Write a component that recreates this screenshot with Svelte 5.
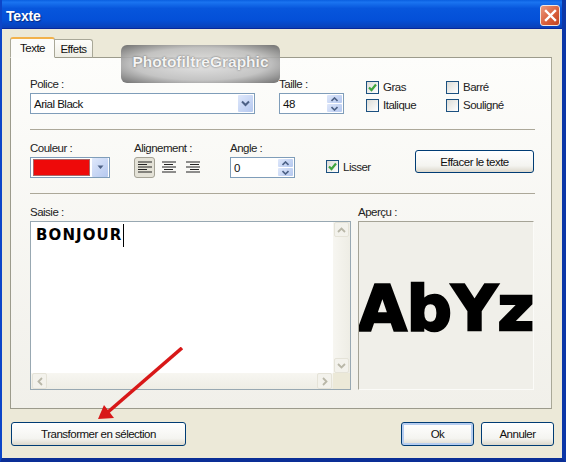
<script lang="ts">
  const alignIcons = [
    { id: 'left', lines: [[0, 13], [0, 9], [0, 13], [0, 9], [0, 13]], active: true },
    { id: 'center', lines: [[0, 13], [2, 9], [0, 13], [2, 9], [0, 13]], active: false },
    { id: 'right', lines: [[0, 13], [4, 9], [0, 13], [4, 9], [0, 13]], active: false },
  ];
</script>

<div class="window">
  <header class="titlebar">
    <span class="title">Texte</span>
    <button class="close" aria-label="Fermer">
      <svg width="13" height="13" viewBox="0 0 13 13">
        <path d="M2 2 L11 11 M11 2 L2 11" stroke="#fff" stroke-width="2.4" stroke-linecap="square" />
      </svg>
    </button>
  </header>

  <div class="client">
    <div class="tabs">
      <div class="tab active">Texte</div>
      <div class="tab">Effets</div>
    </div>

    <section class="panel">
      <div class="row row-font">
        <div class="field police">
          <span class="label">Police :</span>
          <div class="input combo">
            <span class="value">Arial Black</span>
            <span class="drop">
              <svg width="9" height="7" viewBox="0 0 9 7"><path d="M1 1.5 L4.5 5 L8 1.5" fill="none" stroke="#4d6185" stroke-width="2" /></svg>
            </span>
          </div>
        </div>
        <div class="field taille">
          <span class="label">Taille :</span>
          <div class="input spin">
            <span class="value">48</span>
            <span class="spinner">
              <span class="arrow"><svg width="7" height="5" viewBox="0 0 7 5"><path d="M.5 4 L3.5 1 L6.5 4" fill="none" stroke="#4d6185" stroke-width="1.6" /></svg></span>
              <span class="arrow"><svg width="7" height="5" viewBox="0 0 7 5"><path d="M.5 1 L3.5 4 L6.5 1" fill="none" stroke="#4d6185" stroke-width="1.6" /></svg></span>
            </span>
          </div>
        </div>
        <div class="checks">
          <label class="check"><span class="box on"><svg width="11" height="11" viewBox="0 0 11 11"><path d="M2 5.5 L4.5 8 L9 2.5" fill="none" stroke="#3fa53f" stroke-width="2.2" /></svg></span>Gras</label>
          <label class="check"><span class="box"></span>Barré</label>
          <label class="check"><span class="box"></span>Italique</label>
          <label class="check"><span class="box"></span>Souligné</label>
        </div>
      </div>

      <hr />

      <div class="row row-style">
        <div class="field couleur">
          <span class="label">Couleur :</span>
          <div class="input color">
            <span class="swatch"></span>
            <span class="drop small">
              <svg width="7" height="5" viewBox="0 0 7 5"><path d="M.5 .5 L3.5 4 L6.5 .5 Z" fill="#4d6185" /></svg>
            </span>
          </div>
        </div>
        <div class="field alignement">
          <span class="label">Alignement :</span>
          <div class="aligns">
            {#each alignIcons as icon}
              <span class="align" class:active={icon.active}>
                <svg width="15" height="13" viewBox="0 0 15 13">
                  {#each icon.lines as [x, w], i}
                    <rect x={x + 1} y={i * 2.5 + 0.5} width={w + (i % 2 ? 0 : 1)} height="1" fill="#222" />
                  {/each}
                </svg>
              </span>
            {/each}
          </div>
        </div>
        <div class="field angle">
          <span class="label">Angle :</span>
          <div class="input spin">
            <span class="value">0</span>
            <span class="spinner">
              <span class="arrow"><svg width="7" height="5" viewBox="0 0 7 5"><path d="M.5 4 L3.5 1 L6.5 4" fill="none" stroke="#4d6185" stroke-width="1.6" /></svg></span>
              <span class="arrow"><svg width="7" height="5" viewBox="0 0 7 5"><path d="M.5 1 L3.5 4 L6.5 1" fill="none" stroke="#4d6185" stroke-width="1.6" /></svg></span>
            </span>
          </div>
        </div>
        <label class="check lisser"><span class="box on"><svg width="11" height="11" viewBox="0 0 11 11"><path d="M2 5.5 L4.5 8 L9 2.5" fill="none" stroke="#3fa53f" stroke-width="2.2" /></svg></span>Lisser</label>
        <button class="btn effacer">Effacer le texte</button>
      </div>

      <hr />

      <div class="row row-text">
        <div class="field saisie">
          <span class="label">Saisie :</span>
          <div class="textbox">
            <div class="text-area"><span class="typed">BONJOUR</span><span class="caret"></span></div>
            <div class="vscroll">
              <span class="sb-btn"><svg width="9" height="6" viewBox="0 0 9 6"><path d="M1 5 L4.5 1.5 L8 5" fill="none" stroke="#b9b7a8" stroke-width="1.8" /></svg></span>
              <span class="sb-btn"><svg width="9" height="6" viewBox="0 0 9 6"><path d="M1 1 L4.5 4.5 L8 1" fill="none" stroke="#b9b7a8" stroke-width="1.8" /></svg></span>
            </div>
            <div class="hscroll">
              <span class="sb-btn"><svg width="6" height="9" viewBox="0 0 6 9"><path d="M5 1 L1.5 4.5 L5 8" fill="none" stroke="#b9b7a8" stroke-width="1.8" /></svg></span>
              <span class="sb-btn"><svg width="6" height="9" viewBox="0 0 6 9"><path d="M1 1 L4.5 4.5 L1 8" fill="none" stroke="#b9b7a8" stroke-width="1.8" /></svg></span>
            </div>
            <div class="corner"></div>
          </div>
        </div>
        <div class="field apercu">
          <span class="label">Aperçu :</span>
          <div class="preview"><span>AbYz</span></div>
        </div>
      </div>
    </section>

    <footer class="footer">
      <button class="btn transformer">Transformer en sélection</button>
      <div class="actions">
        <button class="btn ok">Ok</button>
        <button class="btn annuler">Annuler</button>
      </div>
    </footer>
  </div>

  <div class="watermark">PhotofiltreGraphic</div>

  <svg class="pointer" width="100" height="80" viewBox="0 0 100 80">
    <path d="M84 1 L10 65" stroke="#d81818" stroke-width="3.6" fill="none" />
    <path d="M0 72 L6 58 L16 71 Z" fill="#d81818" />
  </svg>
</div>

<style>
  :global(body) {
    margin: 0;
    background: #fff;
  }

  .window {
    position: relative;
    width: 566px;
    height: 462px;
    display: flex;
    flex-direction: column;
    box-sizing: border-box;
    overflow: hidden;
    font-family: "Liberation Sans", Arial, sans-serif;
    font-size: 11.5px;
    letter-spacing: -0.5px;
    color: #111;
    background: #0a3fc4;
    border-left: 2px solid #0c45c8;
    border-right: 4px solid #0c37a8;
    border-bottom: 4px solid #0a2e96;
  }

  .titlebar {
    height: 28px;
    flex: none;
    margin: 0 -4px 0 -2px;
    padding: 0 6px;
    display: flex;
    align-items: center;
    justify-content: space-between;
    background: linear-gradient(#0a5fe0 0, #1a74f0 8%, #0756dc 30%, #0450d8 70%, #0a40b8 100%);
    border-bottom: 1px solid #07289c;
  }

  .title {
    font: bold 14px "Liberation Sans", Arial, sans-serif;
    letter-spacing: -0.2px;
    color: #fff;
    text-shadow: 1px 1px 1px #0a2a80;
    margin-top: 3px;
  }

  .close {
    width: 20px;
    height: 21px;
    margin-right: 0;
    margin-top: 2px;
    padding: 0;
    display: flex;
    align-items: center;
    justify-content: center;
    border: 1px solid #f0e6e0;
    border-radius: 3px;
    background: linear-gradient(135deg, #eb9a7e, #d9603c 55%, #c2431f);
  }

  .client {
    flex: 1;
    min-height: 0;
    display: flex;
    flex-direction: column;
    padding: 8px 10px 0 8px;
    background: #ece9d8;
  }

  .tabs {
    display: flex;
    align-items: flex-end;
    height: 21px;
    flex: none;
    position: relative;
    z-index: 1;
    margin-bottom: -1px;
  }

  .tab {
    box-sizing: border-box;
    width: 38px;
    height: 19px;
    line-height: 18px;
    text-align: center;
    border: 1px solid #a9a898;
    border-bottom: 1px solid #9c9b8c;
    border-left: none;
    border-radius: 0 3px 0 0;
    background: linear-gradient(#fdfdfb, #efeee5);
  }

  .tab.active {
    width: 45px;
    height: 21px;
    line-height: 19px;
    border-left: 1px solid #a9a898;
    border-top: 2px solid #f2b24c;
    border-bottom: 1px solid #fcfcfa;
    border-radius: 3px 3px 0 0;
    background: #fcfcfa;
  }

  .panel {
    height: 352px;
    flex: none;
    box-sizing: border-box;
    padding: 20px 16px 0 19px;
    display: flex;
    flex-direction: column;
    border: 1px solid #9c9b8c;
    border-right-color: #a9a898;
    background: linear-gradient(#fdfdfb, #f1f0ea);
  }

  .row {
    display: flex;
  }

  .row-font {
    height: 36px;
  }

  .row-style {
    height: 43px;
    position: relative;
  }

  .row-text {
    gap: 7px;
  }

  hr {
    height: 1px;
    margin: 15px 0 0;
    border: none;
    background: #aca899;
    flex: none;
  }

  hr + .row {
    margin-top: 12px;
  }

  .row-style + hr {
    margin-top: 8px;
  }

  .field {
    display: flex;
    flex-direction: column;
  }

  .label {
    height: 15px;
    line-height: 13px;
    color: #222;
  }

  .input {
    box-sizing: border-box;
    height: 21px;
    display: flex;
    align-items: center;
    border: 1px solid #7f9db9;
    background: #fff;
  }

  .value {
    flex: 1;
    padding-left: 3px;
  }

  .police {
    width: 225px;
    margin-right: 24px;
  }

  .taille {
    width: 65px;
    margin-right: 22px;
  }

  .drop {
    width: 15px;
    height: 17px;
    margin-right: 1px;
    display: flex;
    align-items: center;
    justify-content: center;
    border-radius: 1px;
    background: linear-gradient(135deg, #dfe8fb, #b5c8ef);
  }

  .spinner {
    width: 15px;
    height: 17px;
    margin-right: 1px;
    display: flex;
    flex-direction: column;
    gap: 1px;
  }

  .arrow {
    flex: 1;
    display: flex;
    align-items: center;
    justify-content: center;
    border-radius: 1px;
    background: linear-gradient(135deg, #dfe8fb, #b5c8ef);
  }

  .checks {
    display: grid;
    grid-template-columns: 80px 80px;
    grid-auto-rows: 18px;
  }

  .check {
    display: flex;
    align-items: center;
    gap: 4px;
    color: #222;
  }

  .box {
    box-sizing: border-box;
    width: 13px;
    height: 13px;
    display: flex;
    align-items: center;
    justify-content: center;
    border: 1px solid #1c5180;
    background: linear-gradient(135deg, #dcdcd7, #fff);
  }

  .couleur {
    width: 80px;
    margin-right: 24px;
  }

  .color {
    padding: 2px 1px 2px 2px;
    gap: 2px;
  }

  .swatch {
    flex: 1;
    height: 15px;
    background: #ee0a0a;
    border: 1px solid #a66;
  }

  .drop.small {
    width: 16px;
    height: 19px;
    margin: 0;
  }

  .alignement {
    width: 96px;
  }

  .aligns {
    display: flex;
    gap: 3px;
  }

  .align {
    box-sizing: border-box;
    width: 21px;
    height: 21px;
    display: flex;
    align-items: center;
    justify-content: center;
  }

  .align.active {
    background: #e4e2d7;
    border: 1px solid #a5a396;
    border-radius: 3px;
  }

  .angle {
    width: 65px;
    margin-right: 31px;
  }

  .lisser {
    height: 13px;
    margin-top: 18px;
  }

  .btn {
    box-sizing: border-box;
    height: 24px;
    padding: 0;
    border: 1px solid #003c74;
    border-radius: 3px;
    background: linear-gradient(#fff, #f4f4f0 70%, #dcd8cc);
    font: 11.5px "Liberation Sans", Arial, sans-serif;
    letter-spacing: -0.5px;
    color: #111;
  }

  .effacer {
    position: absolute;
    right: 1px;
    top: 8px;
    width: 119px;
    height: 23px;
  }

  .saisie {
    width: 321px;
  }

  .textbox {
    box-sizing: border-box;
    height: 169px;
    display: grid;
    grid-template-columns: 1fr 17px;
    grid-template-rows: 1fr 16px;
    border: 1px solid #98a8b2;
    background: #fff;
  }

  .text-area {
    padding: 2px 0 0 5px;
    display: flex;
    align-items: flex-start;
  }

  .typed {
    font: bold 15px "DejaVu Sans", sans-serif;
    letter-spacing: 1.1px;
    color: #000;
    line-height: 23px;
  }

  .caret {
    width: 1px;
    height: 23px;
    background: #000;
  }

  .vscroll,
  .hscroll {
    display: flex;
    justify-content: space-between;
    background: linear-gradient(to right, #f7f6f1, #eeede5);
  }

  .vscroll {
    flex-direction: column;
    padding: 0 1px;
  }

  .hscroll {
    background: linear-gradient(#f7f6f1, #eeede5);
    padding: 0 1px;
  }

  .sb-btn {
    box-sizing: border-box;
    min-width: 15px;
    min-height: 15px;
    display: flex;
    align-items: center;
    justify-content: center;
    border: 1px solid #e5e3d8;
    border-radius: 2px;
    background: #f3f2ec;
  }

  .corner {
    background: #ece9d8;
  }

  .apercu {
    width: 176px;
  }

  .preview {
    box-sizing: border-box;
    height: 169px;
    display: flex;
    align-items: center;
    justify-content: center;
    overflow: hidden;
    border: 1px solid #a5a396;
    border-right-color: #fbfbf8;
    border-bottom-color: #fbfbf8;
    background: #f0efe9;
  }

  .preview span {
    font: bold 63px "DejaVu Sans", sans-serif;
    letter-spacing: 0;
    -webkit-text-stroke: 2.5px #000;
    color: #000;
    line-height: 1;
    white-space: nowrap;
    margin-top: 5px;
  }

  .footer {
    flex: 1;
    display: flex;
    justify-content: space-between;
    align-items: flex-start;
    padding: 13px 0 0 1px;
  }

  .transformer {
    width: 175px;
  }

  .actions {
    display: flex;
    gap: 7px;
    margin-right: -2px;
  }

  .ok,
  .annuler {
    width: 73px;
  }

  .ok {
    box-shadow: inset 0 0 0 2px #b6cdf0;
  }

  .watermark {
    position: absolute;
    left: 119px;
    top: 45px;
    width: 159px;
    height: 38px;
    box-sizing: border-box;
    display: flex;
    align-items: center;
    justify-content: center;
    font: bold 15.5px "Liberation Sans", Arial, sans-serif;
    letter-spacing: 0;
    color: #f4f4f4;
    border-radius: 6px;
    background: radial-gradient(ellipse at center, rgba(225, 225, 225, 0.88) 0, rgba(190, 190, 190, 0.9) 60%, rgba(105, 105, 105, 0.95) 100%);
    text-shadow: 0 0 2px #555;
    padding-bottom: 4px;
  }

  .pointer {
    position: absolute;
    left: 96px;
    top: 347px;
  }
</style>
